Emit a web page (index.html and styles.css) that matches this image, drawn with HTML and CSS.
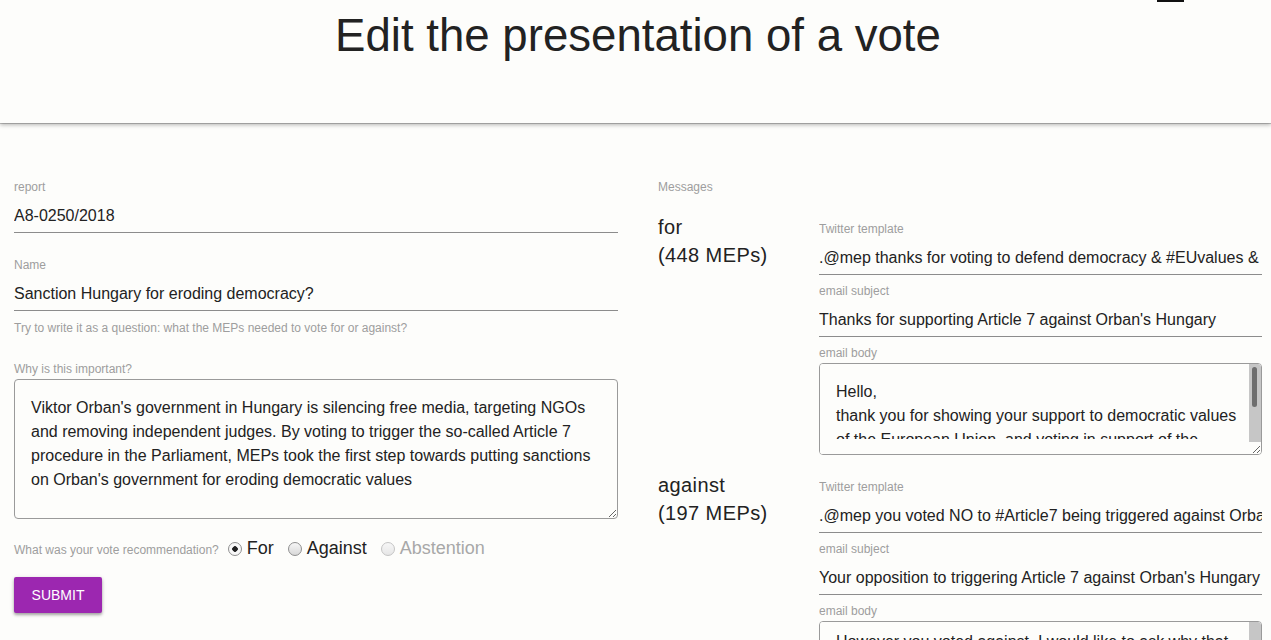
FILE: index.html
```html
<!DOCTYPE html>
<html lang="en">
<head>
<meta charset="utf-8">
<title>Edit the presentation of a vote</title>
<link rel="stylesheet" href="styles.css">
</head>
<body>
<header class="topbar">
  <span class="tab-indicator"></span>
  <h1 class="title">Edit the presentation of a vote</h1>
</header>
<main class="page">
  <section class="vote-col">
    <div class="field">
      <label class="field-label" for="report">report</label>
      <input class="text-input" id="report" value="A8-0250/2018">
    </div>
    <div class="field field-name">
      <label class="field-label" for="name">Name</label>
      <input class="text-input" id="name" value="Sanction Hungary for eroding democracy?">
    </div>
    <p class="helper">Try to write it as a question: what the MEPs needed to vote for or against?</p>
    <div class="field field-why">
      <label class="field-label" for="why">Why is this important?</label>
      <div class="area-wrap">
        <textarea class="text-area text-area-tall" id="why">Viktor Orban's government in Hungary is silencing free media, targeting NGOs and removing independent judges. By voting to trigger the so-called Article 7 procedure in the Parliament, MEPs took the first step towards putting sanctions on Orban's government for eroding democratic values</textarea>
      </div>
    </div>
    <div class="radio-row">
      <span class="radio-question">What was your vote recommendation?</span>
      <label class="radio-option"><input type="radio" name="rec" checked><span>For</span></label>
      <label class="radio-option"><input type="radio" name="rec"><span>Against</span></label>
      <label class="radio-option radio-disabled"><input type="radio" name="rec" disabled><span>Abstention</span></label>
    </div>
    <button class="submit-btn" type="button">Submit</button>
  </section>

  <section class="messages-col">
    <div class="field-label">Messages</div>
    <div class="position">
      <div class="position-title">for<br>(448 MEPs)</div>
      <div class="position-fields">
        <div class="field">
          <label class="field-label">Twitter template</label>
          <input class="text-input" value=".@mep thanks for voting to defend democracy &amp; #EUvalues &amp; the rule of law in Hungary #Article7">
        </div>
        <div class="field field-small-gap">
          <label class="field-label">email subject</label>
          <input class="text-input" value="Thanks for supporting Article 7 against Orban's Hungary">
        </div>
        <div class="field field-small-gap">
          <label class="field-label">email body</label>
          <div class="area-wrap area-clip">
            <textarea class="text-area text-area-short">Hello,
thank you for showing your support to democratic values of the European Union, and voting in support of the report calling to trigger Article 7 against Hungary. Orban's government is silencing free media, targeting NGOs and removing independent judges, and your vote is an important step to stop this.
Best regards,</textarea>
            <div class="scroll-track"><div class="scroll-thumb"></div></div>
          </div>
        </div>
      </div>
    </div>
    <div class="position">
      <div class="position-title">against<br>(197 MEPs)</div>
      <div class="position-fields">
        <div class="field">
          <label class="field-label">Twitter template</label>
          <input class="text-input" value=".@mep you voted NO to #Article7 being triggered against Orban's Hungary. Why? #EUvalues">
        </div>
        <div class="field field-small-gap">
          <label class="field-label">email subject</label>
          <input class="text-input" value="Your opposition to triggering Article 7 against Orban's Hungary">
        </div>
        <div class="field field-small-gap">
          <label class="field-label">email body</label>
          <div class="area-wrap area-clip">
            <textarea class="text-area text-area-short scrolled-body">Hello,

However you voted against. I would like to ask why that was the case, since Orban's government is silencing free media, targeting NGOs and removing independent judges.
Best regards,</textarea>
            <div class="scroll-track"><div class="scroll-thumb scroll-thumb-low"></div></div>
          </div>
        </div>
      </div>
    </div>
  </section>
</main>
<script src="script.js"></script>
</body>
</html>
```

FILE: styles.css
```css
html, body {
  margin: 0;
  padding: 0;
}
body {
  background: #fdfdfb;
  font-family: "Liberation Sans", Arial, sans-serif;
  color: #222;
  overflow: hidden;
}
.topbar {
  position: relative;
  height: 123px;
  background: #fdfdfb;
  box-shadow: 0 1px 0 rgba(0,0,0,0.2), 0 2px 4px rgba(0,0,0,0.28);
  box-sizing: border-box;
  padding-top: 12px;
}
.tab-indicator {
  position: absolute;
  left: 1157px;
  top: 0;
  width: 27px;
  height: 2px;
  background: #111;
}
.title {
  margin: 0;
  padding-left: 5px;
  text-align: center;
  font-size: 45.6px;
  line-height: 48px;
  font-weight: 400;
  color: #222;
}
.page {
  display: grid;
  grid-template-columns: 604px 604px;
  column-gap: 40px;
  padding: 56px 9px 0 14px;
}
.field {
  display: flex;
  flex-direction: column;
  min-width: 0;
}
.field-label {
  display: block;
  font-size: 12px;
  line-height: 16px;
  color: #9e9e9e;
}
.text-input {
  box-sizing: border-box;
  width: 100%;
  min-width: 0;
  height: 38px;
  padding: 4px 0 0;
  margin: 0;
  border: none;
  border-bottom: 1px solid #8c8c8c;
  background: transparent;
  font-family: "Liberation Sans", Arial, sans-serif;
  font-size: 16px;
  color: #222;
  outline: none;
}
.field-name {
  margin-top: 24px;
}
.helper {
  margin: 9px 0 0;
  font-size: 12px;
  line-height: 16px;
  color: #9e9e9e;
}
.field-why {
  margin-top: 25px;
}
.area-wrap {
  position: relative;
  margin-top: 2px;
  display: flex;
}
.area-clip::after {
  content: "";
  position: absolute;
  left: 1px;
  right: 13px;
  bottom: 1px;
  height: 15px;
  background: #fdfdfb;
  border-radius: 0 0 0 3px;
  pointer-events: none;
}
.text-area {
  box-sizing: border-box;
  width: 100%;
  margin: 0;
  border: 1px solid #9a9a9a;
  border-radius: 4px;
  padding: 16px;
  background: #fdfdfb;
  font-family: "Liberation Sans", Arial, sans-serif;
  font-size: 16px;
  line-height: 24px;
  color: #222;
  outline: none;
  display: block;
}
.text-area-tall {
  height: 140px;
}
.text-area-short {
  height: 92px;
  padding-right: 24px;
}
.scroll-track {
  position: absolute;
  right: 1px;
  top: 1px;
  bottom: 13px;
  width: 12px;
  background: #c6c6c6;
  border-radius: 0 3px 0 0;
  box-sizing: border-box;
  padding: 3px 4px 0 3px;
  pointer-events: none;
}
.scroll-thumb {
  width: 5px;
  height: 40px;
  border-radius: 3px;
  background: #6e6e6e;
}
.scroll-thumb-low {
  margin-top: 26px;
}
.radio-row {
  display: flex;
  align-items: baseline;
  height: 24px;
  margin-top: 19px;
}
.radio-question {
  font-size: 12px;
  color: #9e9e9e;
  margin-right: 9px;
}
.radio-option {
  display: flex;
  align-items: baseline;
  font-size: 18px;
  color: #222;
  margin-right: 14px;
}
.radio-option input {
  appearance: none;
  -webkit-appearance: none;
  width: 14px;
  height: 14px;
  margin: 0 5px 0 0;
  border: 1px solid #8f8f8f;
  border-radius: 50%;
  box-sizing: border-box;
  background: linear-gradient(#f6f6f6, #d8d8d8);
  align-self: center;
}
.radio-option input:checked {
  background: radial-gradient(circle, #222 0 2.5px, #f8f8f8 3px);
}
.radio-disabled {
  color: #a8a8a8;
}
.radio-option input:disabled {
  border-color: #c4c4c4;
  background: linear-gradient(#f7f7f7, #e6e6e6);
}
.submit-btn {
  margin-top: 15px;
  width: 88px;
  height: 36px;
  border: none;
  border-radius: 2px;
  background: #9c27b0;
  color: #fff;
  font-family: "Liberation Sans", Arial, sans-serif;
  font-size: 14px;
  text-transform: uppercase;
  box-shadow: 0 2px 3px rgba(0,0,0,0.3), 0 1px 5px rgba(0,0,0,0.12);
  padding: 0;
}
.vote-col {
  display: flex;
  flex-direction: column;
  align-items: stretch;
  min-width: 0;
}
.vote-col .submit-btn {
  align-self: flex-start;
}
.messages-col {
  min-width: 0;
}
.position {
  display: grid;
  grid-template-columns: 161px minmax(0, 1fr);
  margin-top: 18px;
}
.position + .position {
  margin-top: 16px;
}
.position-title {
  font-size: 20px;
  line-height: 28px;
  letter-spacing: 0.4px;
  color: #222;
}
.position-fields {
  padding-top: 8px;
  min-width: 0;
  overflow: hidden;
}
.field-small-gap {
  margin-top: 8px;
}
```

FILE: script.js
```js
var body = document.querySelector('.scrolled-body');
if (body) { body.scrollTop = 56; }
```
